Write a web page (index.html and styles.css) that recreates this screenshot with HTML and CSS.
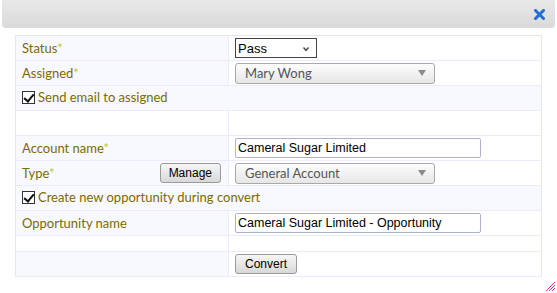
FILE: index.html
```html
<!DOCTYPE html>
<html lang="en">
<head>
    <meta charset="UTF-8">
    <meta name="viewport" content="width=device-width, initial-scale=1.0">
    <title>Convert Lead</title>
    <link rel="stylesheet" href="styles.css">
</head>
<body>
    <div class="dialog">
        <div class="titlebar">
            <a class="close" href="#" title="Close">
                <svg width="11" height="11" viewBox="0 0 11 11">
                    <path d="M1.5 1.5 L9.5 9.5 M9.5 1.5 L1.5 9.5" stroke="#1f6fd6" stroke-width="3" stroke-linecap="square"/>
                </svg>
            </a>
        </div>

        <table class="form-table">
            <tr>
                <td class="label">Status<span class="req">*</span></td>
                <td class="value">
                    <span class="native-select">
                        <select><option>Pass</option></select>
                        <svg class="chev" width="8" height="6" viewBox="0 0 8 6"><path d="M1.5 1.5 L4 4.5 L6.5 1.5" stroke="#444" stroke-width="1.4" fill="none"/></svg>
                    </span>
                </td>
            </tr>
            <tr>
                <td class="label">Assigned<span class="req">*</span></td>
                <td class="value">
                    <div class="combo combo-wide">
                        <span>Mary Wong</span>
                        <span class="arrow"></span>
                    </div>
                </td>
            </tr>
            <tr class="check-row">
                <td colspan="2">
                    <label class="check"><input type="checkbox" checked> Send email to assigned</label>
                </td>
            </tr>
            <tr class="blank">
                <td class="label"></td>
                <td class="value"></td>
            </tr>
            <tr>
                <td class="label">Account name<span class="req">*</span></td>
                <td class="value"><input class="text-input" type="text" value="Cameral Sugar Limited"></td>
            </tr>
            <tr>
                <td class="label">
                    <div class="label-split">
                        <span>Type<span class="req">*</span></span>
                        <button class="btn">Manage</button>
                    </div>
                </td>
                <td class="value">
                    <div class="combo combo-wide">
                        <span>General Account</span>
                        <span class="arrow"></span>
                    </div>
                </td>
            </tr>
            <tr class="check-row">
                <td colspan="2">
                    <label class="check"><input type="checkbox" checked> Create new opportunity during convert</label>
                </td>
            </tr>
            <tr>
                <td class="label">Opportunity name</td>
                <td class="value"><input class="text-input" type="text" value="Cameral Sugar Limited - Opportunity"></td>
            </tr>
            <tr class="blank short">
                <td class="label"></td>
                <td class="value"></td>
            </tr>
            <tr>
                <td class="label"></td>
                <td class="value"><button class="btn btn-wide">Convert</button></td>
            </tr>
        </table>

        <svg class="grip" width="12" height="12" viewBox="0 0 12 12">
            <path d="M11 2 L2 11 M11 5 L5 11 M11 8 L8 11" stroke="#e0308a" stroke-width="1"/>
        </svg>
    </div>
</body>
</html>
```

FILE: styles.css
```css
body {
    margin: 0;
    background: #fff;
    font-family: Lato, "Open Sans", sans-serif;
    font-size: 13px;
}
.dialog {
    position: relative;
    width: 557px;
    height: 293px;
    overflow: hidden;
}
.titlebar {
    height: 28px;
    margin: 0 2px;
    border-radius: 0 0 4px 4px;
    background: linear-gradient(#e9e9e9, #d9d9d9);
    display: flex;
    justify-content: flex-end;
    align-items: center;
}
.close {
    display: flex;
    margin-right: 10px;
    margin-top: 1px;
}
.form-table {
    margin: 7px 0 0 15px;
    width: 527px;
    border-collapse: collapse;
    border: 1px solid #e6e4fa;
}
.form-table td {
    height: 24px;
    padding: 0;
    border-bottom: 1px solid #ecebfa;
    vertical-align: middle;
}
.form-table .label {
    width: 206px;
    padding-left: 6px;
    background: #f8f8ff;
    color: #7d6a00;
}
.form-table .value {
    padding-left: 6px;
    border-left: 1px solid #ecebfa;
    background: #fff;
}
.req {
    color: #c9c62c;
}
.check-row td {
    background: #f8f8ff;
    color: #7d6a00;
    padding-left: 6px;
}
.blank td.label {
    background: #fff;
}
.short td {
    height: 15px;
}
.label-split {
    display: flex;
    justify-content: space-between;
    align-items: center;
    padding-right: 7px;
}
.check {
    display: inline-flex;
    align-items: center;
    gap: 2px;
}
.check input {
    appearance: none;
    width: 13px;
    height: 13px;
    margin: 0 1px 0 0;
    border: 1px solid #333;
    background: #fff;
    position: relative;
}
.check input:checked::after {
    content: "";
    position: absolute;
    left: 3px;
    top: 0px;
    width: 4px;
    height: 8px;
    border: solid #111;
    border-width: 0 2px 2px 0;
    transform: rotate(40deg);
}
.native-select {
    position: relative;
    display: inline-block;
    vertical-align: middle;
}
.native-select select {
    appearance: none;
    width: 82px;
    height: 20px;
    border: 1px solid #444;
    border-radius: 0;
    background: #fff;
    padding: 0 0 0 2px;
    font-family: "Liberation Sans", Arial, sans-serif;
    font-size: 13px;
    color: #000;
}
.native-select .chev {
    position: absolute;
    right: 7px;
    top: 8px;
}
.combo {
    display: flex;
    justify-content: space-between;
    align-items: center;
    box-sizing: border-box;
    height: 21px;
    padding: 0 8px 0 9px;
    border: 1px solid #a9a9a9;
    border-radius: 3px;
    background: linear-gradient(#fdfdfd, #e6e6e6);
    color: #555;
    font-size: 13px;
}
.combo-wide {
    width: 200px;
}
.arrow {
    width: 0;
    height: 0;
    border-left: 4px solid transparent;
    border-right: 4px solid transparent;
    border-top: 6px solid #8a8a8a;
}
.text-input {
    box-sizing: border-box;
    width: 246px;
    height: 20px;
    padding: 0 2px;
    border: 1px solid #aeb0d0;
    border-radius: 2px;
    font-family: "Liberation Sans", Arial, sans-serif;
    font-size: 12.5px;
    color: #000;
}
.btn {
    height: 20px;
    padding: 0 8px;
    border: 1px solid #9a9a9a;
    border-radius: 3px;
    background: linear-gradient(#f6f6f6, #d8d8d8);
    font-family: "Liberation Sans", Arial, sans-serif;
    font-size: 12px;
    color: #000;
}
.btn-wide {
    padding: 0 9px;
}
.grip {
    position: absolute;
    right: 1px;
    bottom: 1px;
}
```
